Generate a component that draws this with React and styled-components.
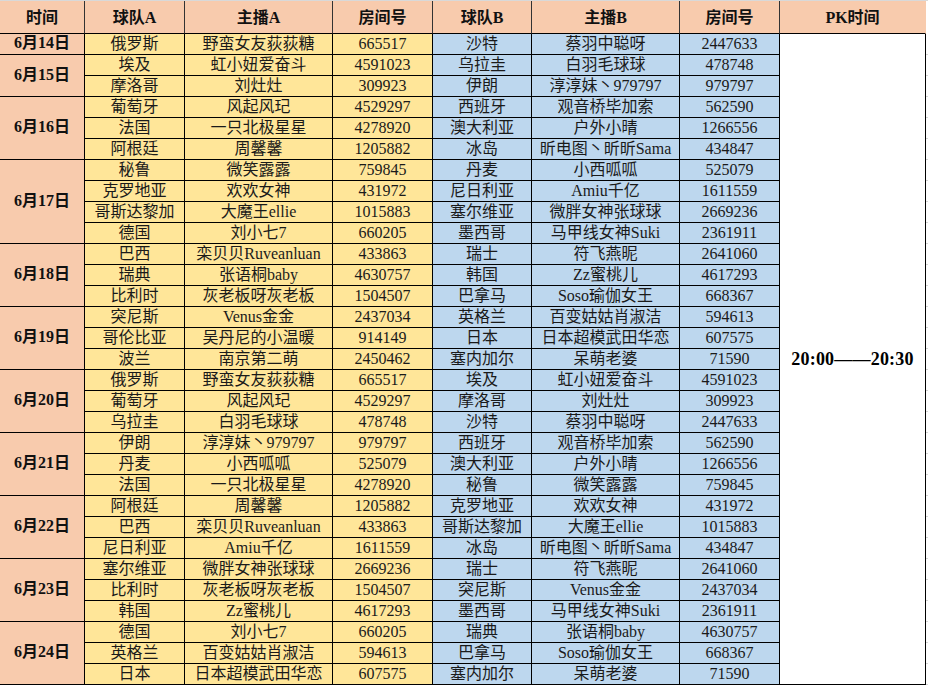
import React from "react";
import styled, { createGlobalStyle } from "styled-components";

const GlobalStyle = createGlobalStyle`
  html, body {
    margin: 0;
    padding: 0;
    background: #fff;
  }
  body {
    font-family: "Liberation Serif", "Noto Sans CJK SC", serif;
    color: #111;
  }
`;

const schedule = [
  {
    date: "6月14日",
    games: [["俄罗斯", "野蛮女友荻荻糖", "665517", "沙特", "蔡羽中聪呀", "2447633"]],
  },
  {
    date: "6月15日",
    games: [
      ["埃及", "虹小妞爱奋斗", "4591023", "乌拉圭", "白羽毛球球", "478748"],
      ["摩洛哥", "刘灶灶", "309923", "伊朗", "淳淳妹丶979797", "979797"],
    ],
  },
  {
    date: "6月16日",
    games: [
      ["葡萄牙", "风起风玘", "4529297", "西班牙", "观音桥毕加索", "562590"],
      ["法国", "一只北极星星", "4278920", "澳大利亚", "户外小晴", "1266556"],
      ["阿根廷", "周馨馨", "1205882", "冰岛", "昕电图丶昕昕Sama", "434847"],
    ],
  },
  {
    date: "6月17日",
    games: [
      ["秘鲁", "微笑露露", "759845", "丹麦", "小西呱呱", "525079"],
      ["克罗地亚", "欢欢女神", "431972", "尼日利亚", "Amiu千亿", "1611559"],
      ["哥斯达黎加", "大魔王ellie", "1015883", "塞尔维亚", "微胖女神张球球", "2669236"],
      ["德国", "刘小七7", "660205", "墨西哥", "马甲线女神Suki", "2361911"],
    ],
  },
  {
    date: "6月18日",
    games: [
      ["巴西", "栾贝贝Ruveanluan", "433863", "瑞士", "符飞燕昵", "2641060"],
      ["瑞典", "张语桐baby", "4630757", "韩国", "Zz蜜桃儿", "4617293"],
      ["比利时", "灰老板呀灰老板", "1504507", "巴拿马", "Soso瑜伽女王", "668367"],
    ],
  },
  {
    date: "6月19日",
    games: [
      ["突尼斯", "Venus金金", "2437034", "英格兰", "百变姑姑肖淑洁", "594613"],
      ["哥伦比亚", "吴丹尼的小温暖", "914149", "日本", "日本超模武田华恋", "607575"],
      ["波兰", "南京第二萌", "2450462", "塞内加尔", "呆萌老婆", "71590"],
    ],
  },
  {
    date: "6月20日",
    games: [
      ["俄罗斯", "野蛮女友荻荻糖", "665517", "埃及", "虹小妞爱奋斗", "4591023"],
      ["葡萄牙", "风起风玘", "4529297", "摩洛哥", "刘灶灶", "309923"],
      ["乌拉圭", "白羽毛球球", "478748", "沙特", "蔡羽中聪呀", "2447633"],
    ],
  },
  {
    date: "6月21日",
    games: [
      ["伊朗", "淳淳妹丶979797", "979797", "西班牙", "观音桥毕加索", "562590"],
      ["丹麦", "小西呱呱", "525079", "澳大利亚", "户外小晴", "1266556"],
      ["法国", "一只北极星星", "4278920", "秘鲁", "微笑露露", "759845"],
    ],
  },
  {
    date: "6月22日",
    games: [
      ["阿根廷", "周馨馨", "1205882", "克罗地亚", "欢欢女神", "431972"],
      ["巴西", "栾贝贝Ruveanluan", "433863", "哥斯达黎加", "大魔王ellie", "1015883"],
      ["尼日利亚", "Amiu千亿", "1611559", "冰岛", "昕电图丶昕昕Sama", "434847"],
    ],
  },
  {
    date: "6月23日",
    games: [
      ["塞尔维亚", "微胖女神张球球", "2669236", "瑞士", "符飞燕昵", "2641060"],
      ["比利时", "灰老板呀灰老板", "1504507", "突尼斯", "Venus金金", "2437034"],
      ["韩国", "Zz蜜桃儿", "4617293", "墨西哥", "马甲线女神Suki", "2361911"],
    ],
  },
  {
    date: "6月24日",
    games: [
      ["德国", "刘小七7", "660205", "瑞典", "张语桐baby", "4630757"],
      ["英格兰", "百变姑姑肖淑洁", "594613", "巴拿马", "Soso瑜伽女王", "668367"],
      ["日本", "日本超模武田华恋", "607575", "塞内加尔", "呆萌老婆", "71590"],
    ],
  },
];

const headers = ["时间", "球队A", "主播A", "房间号", "球队B", "主播B", "房间号", "PK时间"];

const colors = {
  peach: "#f8cbad",
  gold: "#ffe699",
  blue: "#bdd7ee",
};

const totalRows = schedule.reduce((n, d) => n + d.games.length, 0);

const Sheet = styled.div`
  display: grid;
  grid-template-columns: 85px 100px 148px 100px 99px 148px 100px 146px 2px;
  grid-template-rows: 33px repeat(${totalRows}, 21px);
  width: 928px;
  border-top: 1px solid #d9d9d9;
  box-sizing: border-box;
`;

// one spreadsheet cell; $col / $row / $span place it on the sheet grid
const Cell = styled.div`
  box-sizing: border-box;
  display: flex;
  align-items: center;
  justify-content: center;
  white-space: nowrap;
  overflow: hidden;
  grid-column: ${(p) => p.$col};
  grid-row: ${(p) => `${p.$row} / span ${p.$span || 1}`};
  background: ${(p) => p.$bg || "#fff"};
  border-right: 1px solid #000;
  border-bottom: 1px solid #000;
  font-size: 16px;
  line-height: 1;
  color: #1a1a1a;
`;

const HeadCell = styled(Cell)`
  font-weight: bold;
  color: #111;
  background: ${colors.peach};
  border-right-color: ${(p) => (p.$last ? "transparent" : "#333")};
  padding-top: 1px;
`;

const DateCell = styled(Cell)`
  font-weight: bold;
  color: #111;
  background: ${colors.peach};
  padding-bottom: 2px;
`;

const PkCell = styled(Cell)`
  font-weight: bold;
  font-size: 18px;
  letter-spacing: 0.2px;
  color: #000;
`;

const Gutter = styled.div`
  box-sizing: border-box;
  grid-column: 9;
  grid-row: ${(p) => p.$row};
  border-bottom: 1px solid ${(p) => (p.$row === 1 ? "transparent" : "#d4d4d4")};
`;

export default function App() {
  const cells = [];
  let row = 2;

  schedule.forEach((day) => {
    cells.push(
      <DateCell key={day.date} $col={1} $row={row} $span={day.games.length}>
        {day.date}
      </DateCell>
    );
    day.games.forEach((game, gi) => {
      game.forEach((value, ci) => {
        cells.push(
          <Cell
            key={`${day.date}-${gi}-${ci}`}
            $col={ci + 2}
            $row={row}
            $bg={ci < 3 ? colors.gold : colors.blue}
          >
            {value}
          </Cell>
        );
      });
      cells.push(<Gutter key={`${day.date}-${gi}-g`} $row={row} />);
      row += 1;
    });
  });

  return (
    <>
      <GlobalStyle />
      <Sheet>
        {headers.map((h, i) => (
          <HeadCell key={i} $col={i + 1} $row={1} $last={i === headers.length - 1}>
            {h}
          </HeadCell>
        ))}
        <Gutter $row={1} />
        {cells}
        <PkCell $col={8} $row={2} $span={totalRows}>
          20:00——20:30
        </PkCell>
      </Sheet>
    </>
  );
}
